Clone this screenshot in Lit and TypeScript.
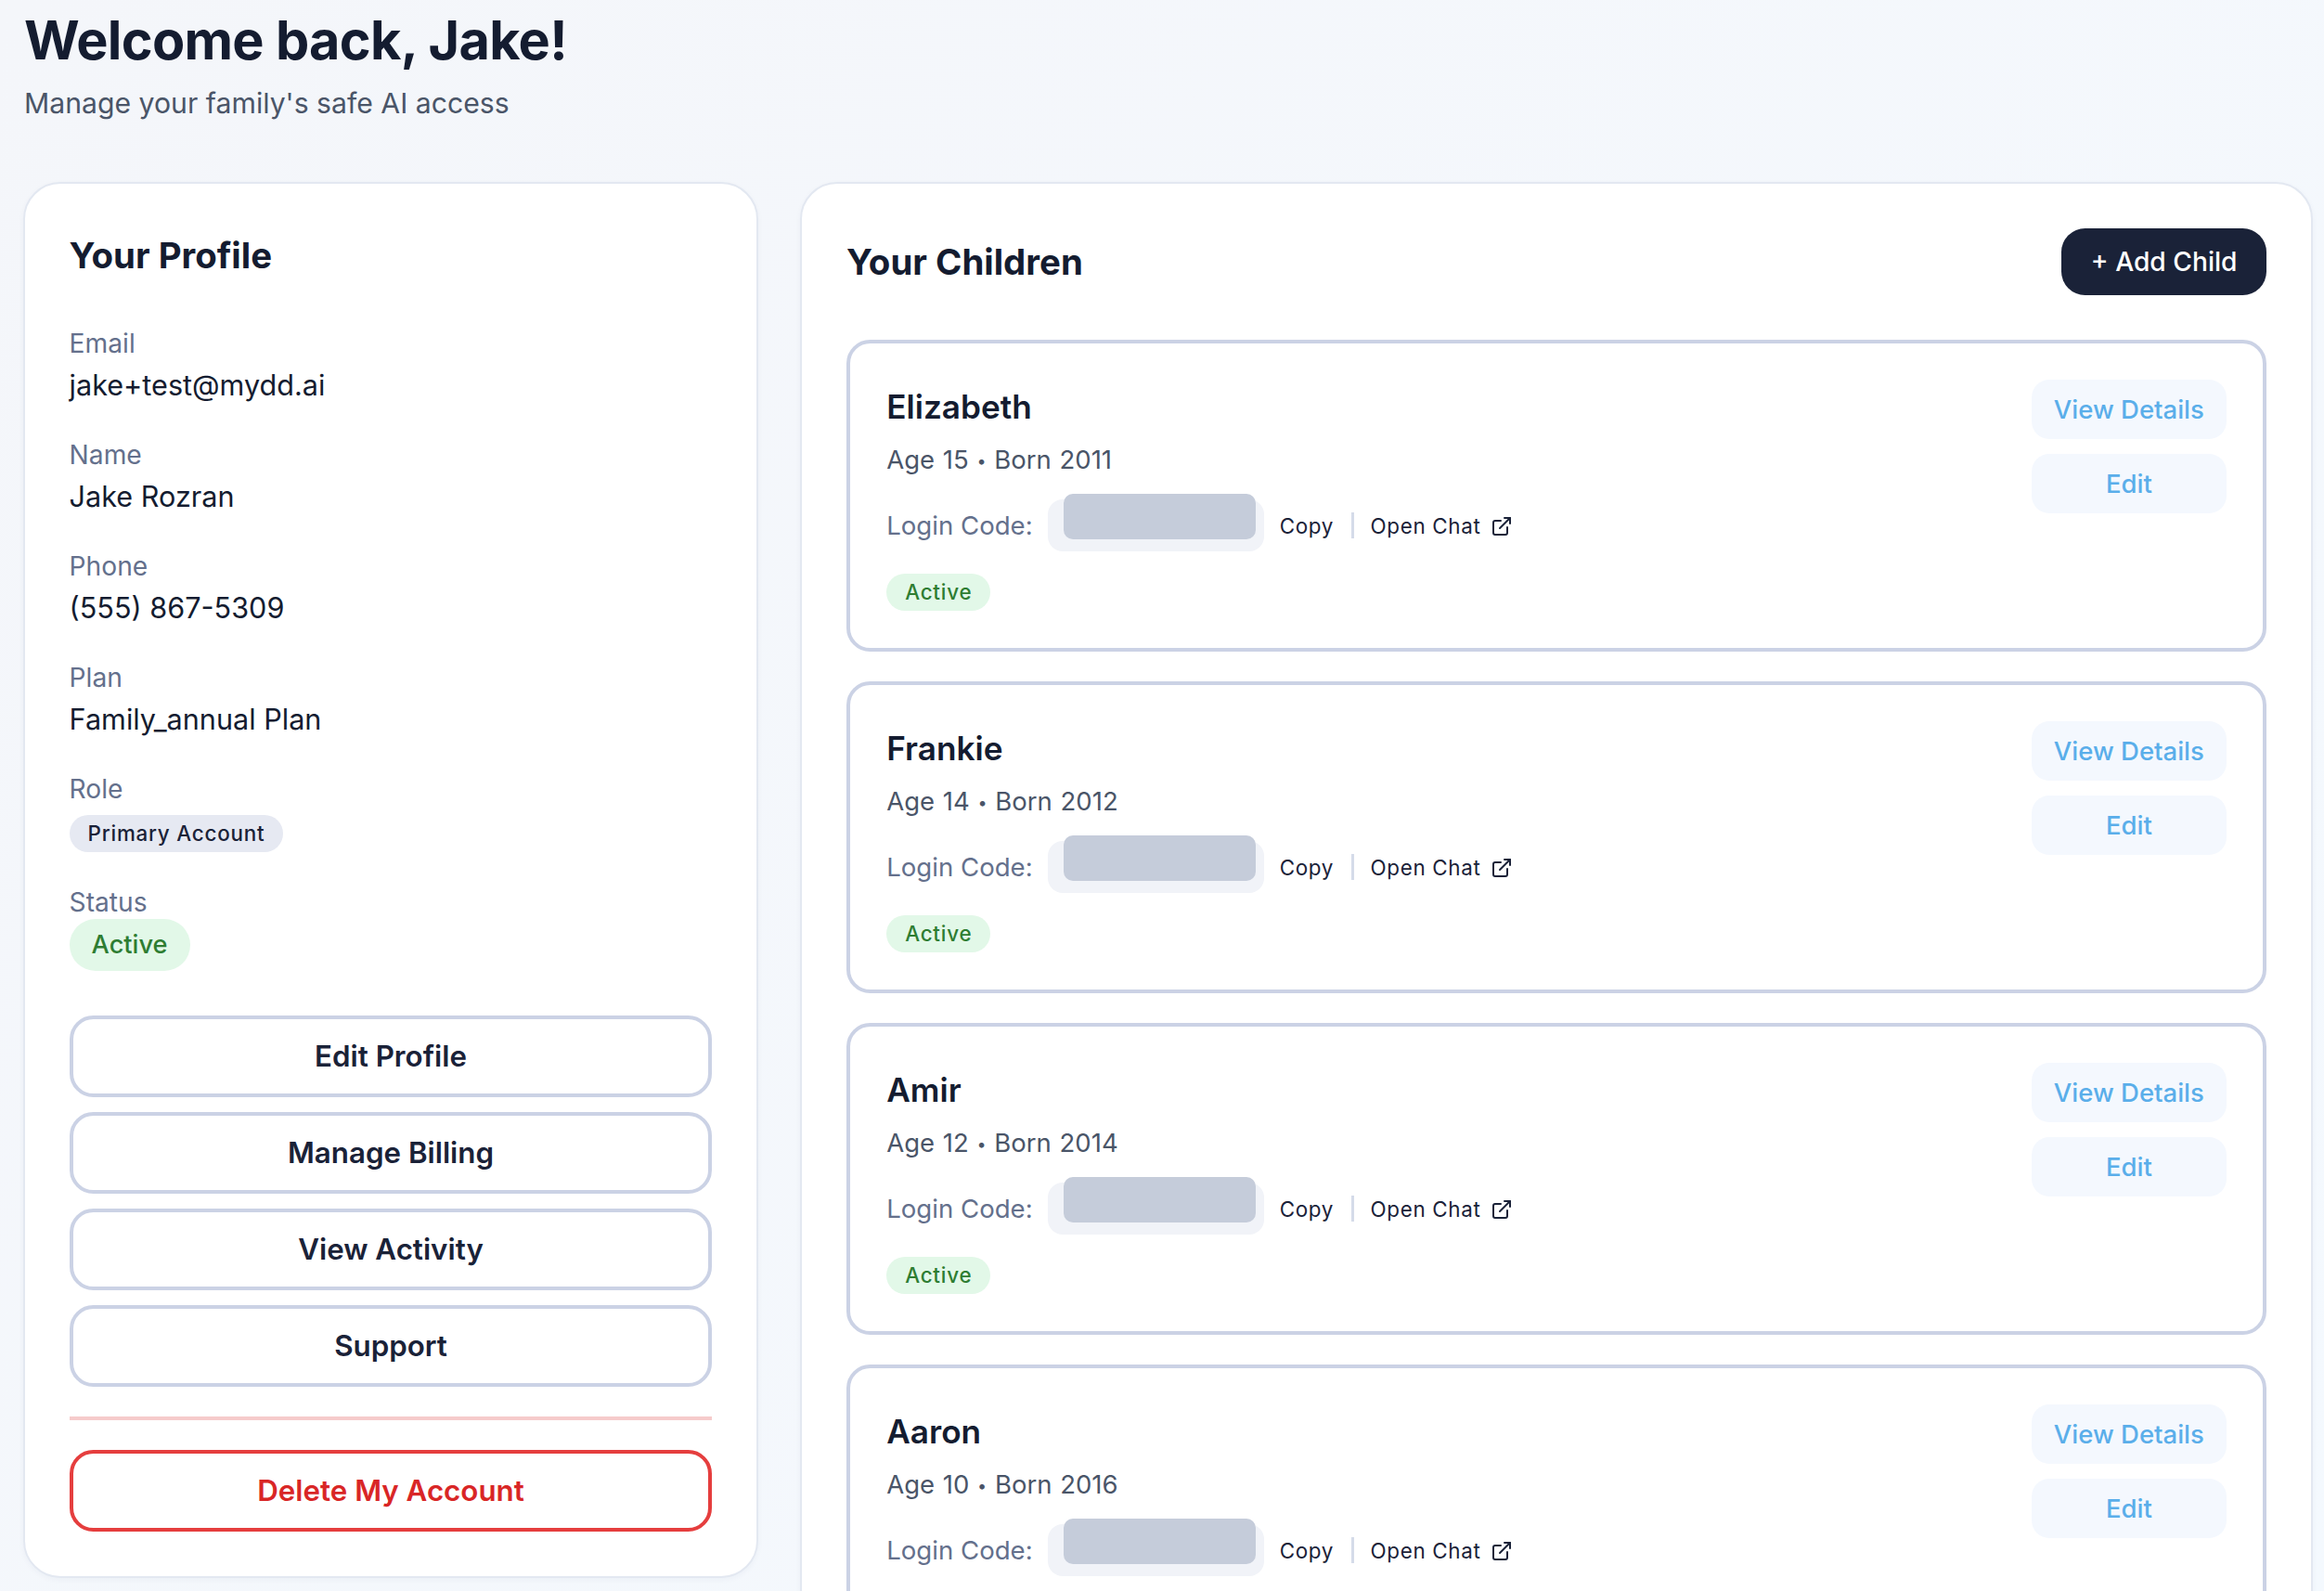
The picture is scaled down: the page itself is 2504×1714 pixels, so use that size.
import { LitElement, html, css } from 'lit';
import { customElement } from 'lit/decorators.js';

const children = [
  { name: 'Elizabeth', age: 15, born: 2011 },
  { name: 'Frankie', age: 14, born: 2012 },
  { name: 'Amir', age: 12, born: 2014 },
  { name: 'Aaron', age: 10, born: 2016 },
];

const profile = [
  { label: 'Email', value: 'jake+test@mydd.ai' },
  { label: 'Name', value: 'Jake Rozran' },
  { label: 'Phone', value: '(555) 867-5309' },
  { label: 'Plan', value: 'Family_annual Plan' },
];

@customElement('app-root')
export class AppRoot extends LitElement {
  static styles = css`
    :host {
      display: block;
      height: 1714px;
      overflow: hidden;
      box-sizing: border-box;
      padding: 9px 12.4px 0 25px;
      font-family: Inter, 'Liberation Sans', sans-serif;
      color: #1a2238;
      background: linear-gradient(135deg, #f4f6fa 0%, #f4f9fe 100%);
    }
    * {
      box-sizing: border-box;
    }
    .top {
      padding-left: 1px;
      margin-bottom: 62px;
    }
    h1 {
      margin: 0;
      font-size: 57.6px;
      line-height: 69px;
      font-weight: 700;
      letter-spacing: -0.7px;
      color: #141c30;
    }
    .sub {
      margin: 10.4px 0 0;
      font-size: 30.2px;
      line-height: 46px;
      color: #4a5568;
    }
    .layout {
      display: grid;
      grid-template-columns: 792px 1fr;
      gap: 45.4px;
      align-items: start;
    }
    .card {
      background: #fff;
      border: 2px solid #e3e8f1;
      border-radius: 40px;
      padding: 47.6px;
      box-shadow: 0 2px 6px rgba(30, 50, 90, 0.04);
    }
    h2 {
      margin: 0;
      font-size: 38.4px;
      line-height: 58px;
      font-weight: 650;
      color: #141c30;
    }
    .rows {
      display: flex;
      flex-direction: column;
      gap: 35.2px;
      margin-top: 47px;
    }
    .label {
      font-size: 28.2px;
      line-height: 38.4px;
      margin-bottom: 3.2px;
      color: #64708c;
    }
    .value {
      font-size: 30.6px;
      line-height: 43.2px;
      color: #141c30;
    }
    .pill {
      display: inline-block;
      border-radius: 28px;
      font-size: 22.4px;
      line-height: 40px;
      padding: 0 20px;
      font-weight: 500;
      letter-spacing: 0.035em;
    }
    .role {
      background: #e6e9f2;
      color: #1a2238;
      margin-top: 3px;
    }
    .active {
      background: #e2f8e8;
      color: #2e7d32;
    }
    .active.big {
      font-size: 27.2px;
      line-height: 56px;
      padding: 0 24px;
      letter-spacing: 0;
      margin-top: -4px;
    }
    .actions {
      display: flex;
      flex-direction: column;
      gap: 16px;
      margin-top: 48px;
    }
    button {
      font-family: inherit;
      cursor: pointer;
    }
    .outline {
      height: 88px;
      width: 100%;
      background: #fff;
      border: 4px solid #cbd2e5;
      border-radius: 25.6px;
      font-size: 31.3px;
      font-weight: 600;
      color: #1a2238;
    }
    .rule {
      border-top: 4px solid #f6cbcb;
      margin: 32px 0;
    }
    .danger {
      border-color: #e53e3e;
      color: #d92626;
    }
    .head {
      display: flex;
      justify-content: space-between;
      align-items: center;
      height: 72px;
      margin-bottom: 48px;
    }
    .add {
      height: 72px;
      padding: 0 31.5px;
      background: #1a2238;
      color: #fff;
      border: none;
      border-radius: 25.6px;
      font-size: 28.2px;
      font-weight: 500;
    }
    .list {
      display: flex;
      flex-direction: column;
      gap: 32px;
    }
    .child {
      display: flex;
      justify-content: space-between;
      align-items: flex-start;
      height: 336px;
      border: 4px solid #cbd2e5;
      border-radius: 25.6px;
      padding: 39.2px;
    }
    .name {
      font-size: 35.2px;
      line-height: 59px;
      font-weight: 600;
      color: #141c30;
    }
    .age {
      margin-top: 6.5px;
      font-size: 27.5px;
      line-height: 41px;
      word-spacing: 1px;
      color: #4a5568;
    }
    .dot {
      font-size: 18px;
      vertical-align: 2px;
    }
    .login {
      display: flex;
      align-items: center;
      height: 56px;
      margin-top: 21.5px;
    }
    .login-label {
      font-size: 27.6px;
      color: #64708c;
      margin-right: 16.5px;
    }
    .code {
      position: relative;
      width: 233px;
      height: 56px;
      background: #f1f3f8;
      border-radius: 16px;
      margin-right: 16.5px;
    }
    .redact {
      position: absolute;
      left: 17px;
      top: -6px;
      width: 207px;
      height: 49px;
      background: #c5ccda;
      border-radius: 10px;
    }
    .link {
      font-size: 22.4px;
      letter-spacing: 0.03em;
      color: #1a2238;
    }
    .sep {
      width: 2.6px;
      height: 28px;
      background: #d5dbe9;
      margin: 0 18px 0 19px;
    }
    .link svg {
      display: inline-block;
      vertical-align: -4px;
      width: 24px;
      height: 24px;
      margin-left: 10px;
    }
    .status {
      margin-top: 24px;
    }
    .btns {
      display: flex;
      flex-direction: column;
      gap: 16px;
      width: 210px;
    }
    .ghost {
      height: 64px;
      background: #f4f8fe;
      border: none;
      border-radius: 19px;
      color: #5aaeea;
      font-size: 27.5px;
      font-weight: 500;
    }
  `;

  render() {
    return html`
      <div class="top">
        <h1>Welcome back, Jake!</h1>
        <p class="sub">Manage your family's safe AI access</p>
      </div>
      <div class="layout">
        <section class="card">
          <h2>Your Profile</h2>
          <div class="rows">
            ${profile.map(
              (p) => html`<div>
                <div class="label">${p.label}</div>
                <div class="value">${p.value}</div>
              </div>`
            )}
            <div>
              <div class="label">Role</div>
              <div class="value"><span class="pill role">Primary Account</span></div>
            </div>
            <div>
              <div class="label">Status</div>
              <span class="pill active big">Active</span>
            </div>
          </div>
          <div class="actions">
            <button class="outline">Edit Profile</button>
            <button class="outline">Manage Billing</button>
            <button class="outline">View Activity</button>
            <button class="outline">Support</button>
          </div>
          <div class="rule"></div>
          <button class="outline danger">Delete My Account</button>
        </section>
        <section class="card">
          <div class="head">
            <h2>Your Children</h2>
            <button class="add">+ Add Child</button>
          </div>
          <div class="list">
            ${children.map(
              (c) => html`<div class="child">
                <div>
                  <div class="name">${c.name}</div>
                  <div class="age">Age ${c.age} <span class="dot">•</span> Born ${c.born}</div>
                  <div class="login">
                    <span class="login-label">Login Code:</span>
                    <span class="code"><span class="redact"></span></span>
                    <span class="link">Copy</span>
                    <span class="sep"></span>
                    <span class="link"
                      >Open Chat<svg
                        viewBox="0 0 24 24"
                        fill="none"
                        stroke="currentColor"
                        stroke-width="2"
                        stroke-linecap="round"
                        stroke-linejoin="round"
                      >
                        <path d="M18 13v6a2 2 0 0 1-2 2H5a2 2 0 0 1-2-2V8a2 2 0 0 1 2-2h6" />
                        <path d="M15 3h6v6" />
                        <path d="M10 14 21 3" />
                      </svg></span
                    >
                  </div>
                  <div class="status"><span class="pill active">Active</span></div>
                </div>
                <div class="btns">
                  <button class="ghost">View Details</button>
                  <button class="ghost">Edit</button>
                </div>
              </div>`
            )}
          </div>
        </section>
      </div>
    `;
  }
}
